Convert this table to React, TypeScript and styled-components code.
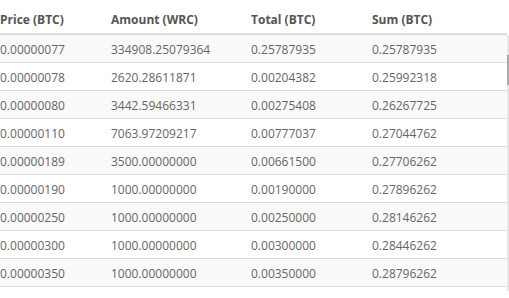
import React from "react";
import styled, { createGlobalStyle } from "styled-components";

const GlobalStyle = createGlobalStyle`
  html, body { margin: 0; padding: 0; background: #ffffff; }
  body { font-family: "Open Sans", "Liberation Sans", sans-serif; }
`;

const Frame = styled.div`
  position: relative;
  width: 509px;
  height: 298px;
  overflow: hidden;
  background: #ffffff;
`;

const Table = styled.div`
  width: 507px;
  display: flex;
  flex-direction: column;
`;

const cols = "111px 140px 121px 1fr";

const HeadRow = styled.div`
  display: grid;
  grid-template-columns: ${cols};
  height: 33px;
  align-items: end;
  border-bottom: 2px solid #dddddd;
`;

const HeadCell = styled.div`
  font-size: 12px;
  font-weight: 700;
  line-height: 16px;
  color: #555555;
  padding-bottom: 5px;
  white-space: nowrap;
`;

const Row = styled.div<{ $striped: boolean }>`
  display: grid;
  grid-template-columns: ${cols};
  background: ${(p) => (p.$striped ? "#f9f9f9" : "#ffffff")};
  border-bottom: 1px solid #dddddd;
`;

const Cell = styled.div`
  font-size: 12px;
  line-height: 16px;
  color: #666666;
  padding: 7px 0 4px 0;
  white-space: nowrap;
`;

const Rail = styled.div`
  position: absolute;
  top: 35px;
  right: 0;
  width: 2px;
  height: 256px;
  background: #e6e6e6;
`;

const Thumb = styled.div`
  position: absolute;
  top: 20px;
  left: 0;
  width: 2px;
  height: 30px;
  background: #a9a9a9;
`;

const rows: [string, string, string, string][] = [
  ["0.00000077", "334908.25079364", "0.25787935", "0.25787935"],
  ["0.00000078", "2620.28611871", "0.00204382", "0.25992318"],
  ["0.00000080", "3442.59466331", "0.00275408", "0.26267725"],
  ["0.00000110", "7063.97209217", "0.00777037", "0.27044762"],
  ["0.00000189", "3500.00000000", "0.00661500", "0.27706262"],
  ["0.00000190", "1000.00000000", "0.00190000", "0.27896262"],
  ["0.00000250", "1000.00000000", "0.00250000", "0.28146262"],
  ["0.00000300", "1000.00000000", "0.00300000", "0.28446262"],
  ["0.00000350", "1000.00000000", "0.00350000", "0.28796262"],
];

export default function App() {
  return (
    <>
      <GlobalStyle />
      <Frame>
        <Table>
          <HeadRow>
            <HeadCell>Price (BTC)</HeadCell>
            <HeadCell>Amount (WRC)</HeadCell>
            <HeadCell>Total (BTC)</HeadCell>
            <HeadCell>Sum (BTC)</HeadCell>
          </HeadRow>
          {rows.map((r, i) => (
            <Row key={i} $striped={i % 2 === 0}>
              {r.map((c, j) => (
                <Cell key={j}>{c}</Cell>
              ))}
            </Row>
          ))}
        </Table>
        <Rail>
          <Thumb />
        </Rail>
      </Frame>
    </>
  );
}
